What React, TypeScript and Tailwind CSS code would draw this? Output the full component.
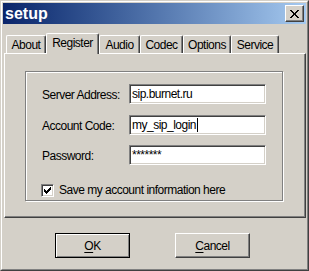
const tabs = [
  { name: "About", w: "w-[40px]" },
  { name: "Register", w: "w-[53px]", active: true },
  { name: "Audio", w: "w-[41px]" },
  { name: "Codec", w: "w-[43px]" },
  { name: "Options", w: "w-[48px]" },
  { name: "Service", w: "w-[48px]" },
];

const fields = [
  { label: "Server Address:", value: "sip.burnet.ru", mt: "" },
  { label: "Account Code:", value: "my_sip_login", mt: "mt-[10px]", caret: true },
  { label: "Password:", value: "*******", mt: "mt-[9px]" },
];

const sunken =
  "border border-t-[#808080] border-l-[#808080] border-b-white border-r-white shadow-[inset_1px_1px_0_#404040,inset_-1px_-1px_0_#d4d0c8]";

function CloseGlyph() {
  return (
    <svg width="9" height="8" viewBox="0 0 9 8" shapeRendering="crispEdges">
      <path
        fill="#000"
        d="M0 0h2v1h-2zM7 0h2v1h-2zM1 1h2v1h-2zM6 1h2v1h-2zM2 2h2v1h-2zM5 2h2v1h-2zM3 3h3v2h-3zM2 5h2v1h-2zM5 5h2v1h-2zM1 6h2v1h-2zM6 6h2v1h-2zM0 7h2v1h-2zM7 7h2v1h-2z"
      />
    </svg>
  );
}

function CheckGlyph() {
  return (
    <svg width="7" height="7" viewBox="0 0 7 7" shapeRendering="crispEdges">
      <path
        fill="#000"
        d="M0 2h1v3h-1zM1 3h1v3h-1zM2 4h1v3h-1zM3 3h1v3h-1zM4 2h1v3h-1zM5 1h1v3h-1zM6 0h1v3h-1z"
      />
    </svg>
  );
}

export default function App() {
  return (
    <div className="w-[309px] h-[271px] bg-[#d4d0c8] border border-t-[#d4d0c8] border-l-[#d4d0c8] border-r-[#404040] border-b-[#404040] font-['Liberation_Sans',Arial,sans-serif] text-[12px] tracking-[-0.5px] text-black">
      <div className="h-full border border-t-white border-l-white border-r-[#808080] border-b-[#808080] p-px">
        {/* Caption */}
        <div className="h-[21px] flex items-center justify-between pl-[2px] bg-gradient-to-r from-[#0a246a] to-[#a6caf0]">
          <span className="text-white font-bold text-[16px] tracking-normal leading-none">setup</span>
          <div className="mr-[2px] w-[19px] h-[17px] flex items-center justify-center bg-[#d4d0c8] border border-t-white border-l-white border-r-[#404040] border-b-[#404040] shadow-[inset_-1px_-1px_0_#808080]">
            <CloseGlyph />
          </div>
        </div>

        {/* Tab control */}
        <div className="mt-[9px] ml-px w-[302px]">
          <div className="relative z-10 -mb-px h-[21px] flex items-end pl-[2px]">
            {tabs.map((t) =>
              t.active ? (
                <div
                  key={t.name}
                  className={`${t.w} h-[21px] pb-[2px] flex items-center justify-center bg-[#d4d0c8] border-t border-l border-r border-t-white border-l-white border-r-[#404040] rounded-t-[2px] shadow-[inset_-1px_0_0_#808080]`}
                >
                  {t.name}
                </div>
              ) : (
                <div
                  key={t.name}
                  className={`${t.w} h-[18px] mb-px flex items-center justify-center bg-[#d4d0c8] border-t border-l border-r border-t-white border-l-white border-r-[#404040] rounded-t-[2px] shadow-[inset_-1px_0_0_#808080]`}
                >
                  {t.name}
                </div>
              )
            )}
          </div>

          <div className="h-[165px] pt-[17px] pl-[20px] border border-t-white border-l-white border-r-[#404040] border-b-[#404040] shadow-[inset_-1px_-1px_0_#808080]">
            {/* Group frame */}
            <div className="w-[258px] h-[130px] pt-[11px] pl-[16px] border border-[#808080] shadow-[inset_1px_1px_0_#fff,1px_1px_0_#fff]">
              {fields.map((f) => (
                <div key={f.label} className={`flex items-center ${f.mt}`}>
                  <span className="w-[87px] pt-[3px]">{f.label}</span>
                  <div className={`w-[137px] h-[20px] bg-white pl-[2px] flex items-center ${sunken}`}>
                    <span>{f.value}</span>
                    {f.caret && <span className="ml-[1px] w-px h-[14px] bg-black" />}
                  </div>
                </div>
              ))}

              <div className="mt-[16px] -ml-px flex items-center">
                <div className={`w-[13px] h-[13px] bg-white flex items-center justify-center ${sunken}`}>
                  <CheckGlyph />
                </div>
                <span className="ml-[5px]">Save my account information here</span>
              </div>
            </div>
          </div>
        </div>

        {/* Buttons */}
        <div className="mt-[15px] ml-[52px] flex gap-[45px]">
          <button className="w-[75px] h-[25px] bg-[#d4d0c8] border border-black shadow-[inset_1px_1px_0_#fff,inset_-1px_-1px_0_#808080] flex items-center justify-center">
            <span>
              <span className="underline underline-offset-2">O</span>K
            </span>
          </button>
          <button className="w-[75px] h-[25px] bg-[#d4d0c8] border border-t-white border-l-white border-r-[#404040] border-b-[#404040] shadow-[inset_-1px_-1px_0_#808080] flex items-center justify-center">
            <span>
              <span className="underline underline-offset-2">C</span>ancel
            </span>
          </button>
        </div>
      </div>
    </div>
  );
}
